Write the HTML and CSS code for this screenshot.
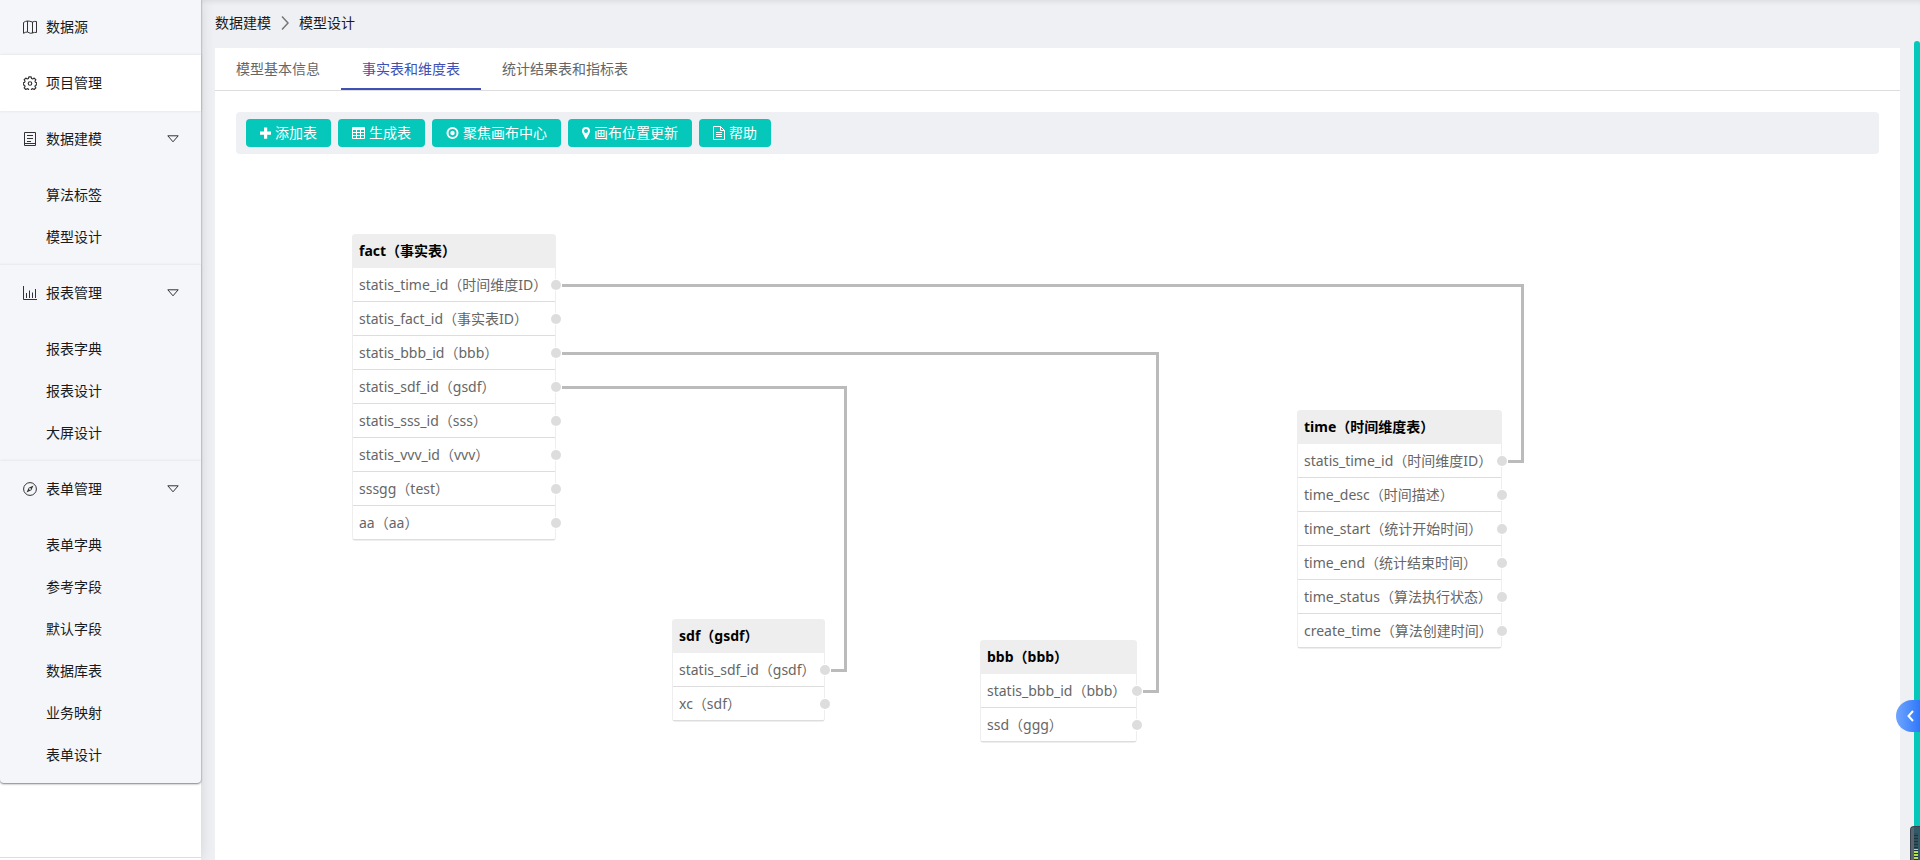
FILE: index.html
```html
<!DOCTYPE html>
<html lang="zh-CN">
<head>
<meta charset="utf-8">
<title>模型设计</title>
<link rel="stylesheet" href="styles.css">
</head>
<body>
<div class="app">
  <aside class="sidebar">
    <nav class="menu">
      <a class="menu-item" href="#"><svg class="icon" viewBox="0 0 14 14"><path d="M.5 2.500Q2.500 1 4.500 1T9.500 2Q11.500 1 13.500 1.500V12.500Q11.500 12 9.500 13T4.500 12Q2.500 12 .5 13.300zM4.500 1v11M9.500 2v11"/></svg>数据源</a>
      <a class="menu-item active" href="#"><svg class="icon" viewBox="0 0 24 24"><path class="gear" d="M10 1.500h4l.7 2.800 2 .8 2.500-1.500 2.800 2.800-1.500 2.500.8 2 2.200.7v3.600l-2.200.700-.8 2 1.500 2.500-2.800 2.800-2.500-1.500-2 .8-.7 2.300h-4l-.7-2.300-2-.8-2.500 1.500L2 20.400l1.500-2.500-.8-2-2.200-.7v-3.600l2.200-.7.800-2L2 6.400l2.800-2.800 2.500 1.500 2-.8z"/><circle class="gear" cx="12" cy="12.800" r="3"/></svg>项目管理</a>
      <section class="group">
        <a class="menu-item" href="#"><svg class="icon" viewBox="0 0 14 14"><path d="M1.500.500h11v13h-11zM4 3.500h6M4 6.500h6M4 9.500h4M1.500 11.500h11"/></svg>数据建模<svg class="caret" viewBox="0 0 12 8"><path d="M.8.800h10.400L6 6.800z"/></svg></a>
        <ul class="submenu">
          <li><a href="#">算法标签</a></li>
          <li><a href="#">模型设计</a></li>
        </ul>
      </section>
      <section class="group">
        <a class="menu-item" href="#"><svg class="icon" viewBox="0 0 14 14"><path d="M.500 0v13.500H14M3.500 12V7M6.500 12V4.500M9.500 12V6.500M12.500 12V3"/></svg>报表管理<svg class="caret" viewBox="0 0 12 8"><path d="M.8.800h10.400L6 6.800z"/></svg></a>
        <ul class="submenu">
          <li><a href="#">报表字典</a></li>
          <li><a href="#">报表设计</a></li>
          <li><a href="#">大屏设计</a></li>
        </ul>
      </section>
      <section class="group">
        <a class="menu-item" href="#"><svg class="icon" viewBox="0 0 14 14"><circle cx="7" cy="7" r="6.400"/><path class="solid" d="M10.500 3.500 8.300 8.300 3.500 10.500 5.700 5.700z"/><circle class="hole" cx="7" cy="7" r=".9"/></svg>表单管理<svg class="caret" viewBox="0 0 12 8"><path d="M.8.800h10.400L6 6.800z"/></svg></a>
        <ul class="submenu">
          <li><a href="#">表单字典</a></li>
          <li><a href="#">参考字段</a></li>
          <li><a href="#">默认字段</a></li>
          <li><a href="#">数据库表</a></li>
          <li><a href="#">业务映射</a></li>
          <li><a href="#">表单设计</a></li>
        </ul>
      </section>
    </nav>
    <div class="sidebar-foot"></div>
  </aside>

  <main class="main">
    <nav class="breadcrumb">
      <a href="#">数据建模</a>
      <svg class="crumb-arrow" viewBox="0 0 8 14"><path d="M1 .5 7 7l-6 6.500"/></svg>
      <span>模型设计</span>
    </nav>
    <div class="card">
      <div class="tabs" role="tablist">
        <button class="tab" role="tab">模型基本信息</button>
        <button class="tab selected" role="tab" aria-selected="true">事实表和维度表</button>
        <button class="tab" role="tab">统计结果表和指标表</button>
      </div>
      <div class="content">
        <div class="toolbar">
          <button class="btn"><svg width="11" height="14" viewBox="0 0 11 14"><path class="fill" d="M4 1.500h3.200v4H11v3.200H7.200v4H4v-4H0V5.500h4z"/></svg>添加表</button>
          <button class="btn"><svg width="13" height="14" viewBox="0 0 13 14"><path class="fill" fill-rule="evenodd" d="M1 1h11a1 1 0 0 1 1 1v10a1 1 0 0 1-1 1H1a1 1 0 0 1-1-1V2a1 1 0 0 1 1-1zM1 4v2h3V4zM5 4v2h3V4zM9 4v2h3V4zM1 7v2h3V7zM5 7v2h3V7zM9 7v2h3V7zM1 10v2h3v-2zM5 10v2h3v-2zM9 10v2h3v-2z"/></svg>生成表</button>
          <button class="btn"><svg width="13" height="14" viewBox="0 0 13 14"><circle class="line" cx="6.500" cy="7" r="5"/><circle class="fill" cx="6.500" cy="7" r="2.200"/></svg>聚焦画布中心</button>
          <button class="btn"><svg width="8" height="14" viewBox="0 0 8 14"><path class="fill" fill-rule="evenodd" d="M4 1a4 4 0 0 1 4 4c0 1.300-.5 2-1 3l-2.300 4.600a.8.800 0 0 1-1.400 0L1 8C.5 7 0 6.300 0 5a4 4 0 0 1 4-4zm0 2a2 2 0 1 0 0 4 2 2 0 0 0 0-4z"/></svg>画布位置更新</button>
          <button class="btn"><svg width="12" height="14" viewBox="0 0 12 14"><path class="thin" d="M.5.500h7l4 4v9H.5zM7.500.500v4h4M3 6.500h6M3 8.500h6M3 10.500h6"/></svg>帮助</button>
        </div>

        <div class="canvas">
          <svg class="links" width="1643" height="706">
            <path d="M326 131.500H1286.500V307.500H1272"/>
            <path d="M326 199.500H921.500V537.500H907"/>
            <path d="M326 233.500H609.500V516.500H595"/>
          </svg>
          <section class="node node-fact">
            <h3>fact（事实表）</h3>
            <ul>
              <li>statis_time_id（时间维度ID）</li>
              <li>statis_fact_id（事实表ID）</li>
              <li>statis_bbb_id（bbb）</li>
              <li>statis_sdf_id（gsdf）</li>
              <li>statis_sss_id（sss）</li>
              <li>statis_vvv_id（vvv）</li>
              <li>sssgg（test）</li>
              <li>aa（aa）</li>
            </ul>
          </section>
          <section class="node node-sdf">
            <h3>sdf（gsdf）</h3>
            <ul>
              <li>statis_sdf_id（gsdf）</li>
              <li>xc（sdf）</li>
            </ul>
          </section>
          <section class="node node-bbb">
            <h3>bbb（bbb）</h3>
            <ul>
              <li>statis_bbb_id（bbb）</li>
              <li>ssd（ggg）</li>
            </ul>
          </section>
          <section class="node node-time">
            <h3>time（时间维度表）</h3>
            <ul>
              <li>statis_time_id（时间维度ID）</li>
              <li>time_desc（时间描述）</li>
              <li>time_start（统计开始时间）</li>
              <li>time_end（统计结束时间）</li>
              <li>time_status（算法执行状态）</li>
              <li>create_time（算法创建时间）</li>
            </ul>
          </section>
        </div>
      </div>
    </div>
  </main>
</div>
<div class="scroll-thumb"></div>
<button class="drawer-handle" aria-label="展开"><svg width="7" height="12" viewBox="0 0 7 12"><path d="M6 1 1.500 6 6 11"/></svg></button>
<div class="meter"><div class="meter-bars"></div></div>
</body>
</html>
```
FILE: styles.css
```css
* { box-sizing: border-box; }

body {
  margin: 0;
  height: 100vh;
  overflow: hidden;
  background: #eef0f4;
  color: #1a1a1a;
  font: 14px/20px "Noto Sans", "Noto Sans CJK SC", sans-serif;
}

a { color: inherit; text-decoration: none; }
ul { list-style: none; margin: 0; padding: 0; }
button { border: 0; font: inherit; cursor: pointer; }

.app { display: flex; height: 100vh; }

/* Sidebar */
.sidebar {
  display: flex;
  flex-direction: column;
  justify-content: space-between;
  flex: 0 0 201px;
  background: #fff;
  box-shadow: 0 0 14px rgba(0, 0, 0, 0.12);
  z-index: 1;
}
.menu {
  margin-top: -1px;
  background: #f4f6fa;
  border-radius: 0 0 4px 4px;
  box-shadow: 0 1px 2px rgba(0, 0, 0, 0.5);
}
.menu-item {
  display: flex;
  align-items: center;
  gap: 9px;
  height: 56px;
  padding: 0 22px 0 23px;
}
.menu-item.active { background: #fff; box-shadow: 0 0 3px rgba(0, 0, 0, 0.1); }
.group + .group { box-shadow: 0 -1px 2px rgba(0, 0, 0, 0.06); }
.submenu { padding: 7px 0; }
.submenu a { display: flex; align-items: center; height: 42px; padding-left: 46px; }
.icon { width: 14px; height: 14px; fill: none; stroke: #333; stroke-width: 1; }
.icon .gear { stroke-width: 2; stroke-linejoin: round; }
.icon .solid { fill: #333; stroke: none; }
.icon .hole { fill: #f4f6fa; stroke: none; }
.caret { width: 12px; height: 8px; margin-left: auto; fill: none; stroke: #333; stroke-width: 1; }
.sidebar-foot { height: 3px; border-top: 1px solid #ddd; }

/* Main column */
.main {
  display: flex;
  flex-direction: column;
  flex: 1;
  min-width: 0;
  padding: 0 20px 0 14px;
  box-shadow: inset 0 5px 5px -3px rgba(0, 0, 0, 0.08);
}
.breadcrumb { display: flex; align-items: center; gap: 10px; height: 48px; padding-bottom: 2px; }
.crumb-arrow { width: 8px; height: 14px; fill: none; stroke: #777; stroke-width: 1.5; }
.card { display: flex; flex-direction: column; flex: 1; min-height: 0; background: #fff; }

.tabs { display: flex; height: 43px; border-bottom: 1px solid #ddd; }
.tab { height: 42px; padding: 0 21px; background: none; color: #666; }
.tab.selected { color: #3f51b5; border-bottom: 2px solid #3f51b5; padding-top: 2px; }

.content { display: flex; flex-direction: column; flex: 1; min-height: 0; padding: 21px 21px 0; }
.toolbar { display: flex; gap: 7px; padding: 7px 10px; border-radius: 4px; background: #eef0f4; }
.btn {
  display: flex;
  align-items: center;
  gap: 4px;
  height: 28px;
  padding: 0 14px;
  border-radius: 4px;
  background: #05c8bb;
  color: #fff;
}
.btn .fill { fill: #fff; }
.btn .line { fill: none; stroke: #fff; stroke-width: 2; }
.btn .thin { fill: none; stroke: #fff; stroke-width: 1; }

/* Diagram */
.canvas { position: relative; flex: 1; min-height: 0; overflow: hidden; }
.links { position: absolute; left: 0; top: 0; fill: none; stroke: #bbb; stroke-width: 3; }
.node {
  position: absolute;
  border: 1px solid #eee;
  border-top: 0;
  border-radius: 4px;
  color: #666;
  white-space: nowrap;
}
.node h3 {
  height: 34px;
  margin: 0 -1px;
  padding: 0 7px;
  border-radius: 4px 4px 0 0;
  background: #eee;
  color: #000;
  font-size: 14px;
  line-height: 34px;
}
.node li {
  position: relative;
  height: 34px;
  padding: 0 6px;
  border-bottom: 1px solid #ddd;
  line-height: 33px;
}
.node li::after {
  content: "";
  position: absolute;
  right: -6px;
  top: 12px;
  width: 10px;
  height: 10px;
  border-radius: 50%;
  background: #ddd;
  box-shadow: 0 0 0 1px #fff;
}
.node-fact { left: 116px; top: 80px; width: 204px; }
.node-sdf { left: 436px; top: 465px; width: 153px; }
.node-bbb { left: 744px; top: 486px; width: 157px; }
.node-time { left: 1061px; top: 256px; width: 205px; }

/* Floating pieces at the right edge */
.scroll-thumb {
  position: fixed;
  right: 0;
  top: 41px;
  bottom: 0;
  width: 6px;
  border-radius: 3px 3px 0 0;
  background: #05c8bb;
}
.drawer-handle {
  position: fixed;
  right: 0;
  top: 700px;
  display: flex;
  align-items: center;
  justify-content: center;
  width: 24px;
  height: 32px;
  padding: 0 0 0 4px;
  border-radius: 16px 0 0 16px;
  background: linear-gradient(90deg, #70a5ff, #2f78fb);
  z-index: 2;
}
.drawer-handle path { fill: none; stroke: #fff; stroke-width: 2; }
.meter {
  position: fixed;
  right: 0;
  bottom: 0;
  width: 10px;
  height: 34px;
  padding: 6px 2px 0 3px;
  border: 1px solid #39424c;
  border-width: 1px 0 0 1px;
  border-radius: 4px 0 0 0;
  background: linear-gradient(90deg, #5b6570 3px, #2f5a68 3px);
  z-index: 2;
}
.meter-bars {
  height: 27px;
  background:
    repeating-linear-gradient(#0000 0 2px, #22313a 2px 3px),
    linear-gradient(#2f4f5a 16px, #b8e04a 16px);
}
```
